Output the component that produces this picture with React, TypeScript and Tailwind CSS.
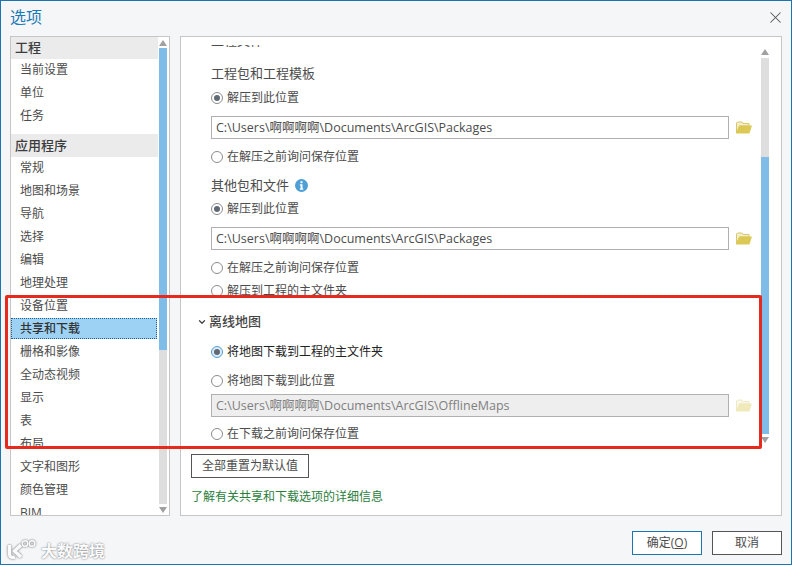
import { ChevronDown, X } from 'lucide-react';

const projectItems = ['当前设置', '单位', '任务'];
const appItems = [
  '常规',
  '地图和场景',
  '导航',
  '选择',
  '编辑',
  '地理处理',
  '设备位置',
  '共享和下载',
  '栅格和影像',
  '全动态视频',
  '显示',
  '表',
  '布局',
  '文字和图形',
  '颜色管理',
  'BIM',
];

function FolderIcon({ disabled }: { disabled?: boolean }) {
  return (
    <svg width="16" height="13" viewBox="0 0 16 13" className={disabled ? 'opacity-40' : ''}>
      <path d="M0.5 12V2L1.5 1H6L7 2.5H13V5H3.5L0.5 12Z" fill="#f4efd0" stroke="#d8c765" strokeWidth="1" />
      <path d="M0 12.5L3.2 4.6H16L13.4 12.5H0Z" fill="#dcc955" />
    </svg>
  );
}

function InfoIcon() {
  return (
    <svg width="13" height="13" viewBox="0 0 13 13">
      <circle cx="6.5" cy="6.5" r="6.5" fill="#4d9fd6" />
      <rect x="5.5" y="2.2" width="2" height="2" fill="#fff" />
      <path d="M4.8 5.2H7.5V9.6H8.3V10.8H4.8V9.6H5.6V6.4H4.8Z" fill="#fff" />
    </svg>
  );
}

function ScrollBar({ before, thumb, after }: { before: string; thumb: string; after: string }) {
  return (
    <div className="flex h-full w-2 flex-col items-center">
      <div className={`flex shrink-0 items-center justify-center ${before}`}>
        <div className="h-0 w-0 border-x-[4px] border-b-[6px] border-x-transparent border-b-[#a0a0a0]" />
      </div>
      <div className="flex w-2 flex-1 flex-col bg-[#dedede]">
        <div className={thumb} />
        <div className={after} />
      </div>
      <div className="flex h-[11px] shrink-0 items-center justify-center">
        <div className="h-0 w-0 border-x-[4px] border-t-[6px] border-x-transparent border-t-[#a0a0a0]" />
      </div>
    </div>
  );
}

function SideHeader({ label, first }: { label: string; first?: boolean }) {
  return (
    <div
      className={`flex items-center bg-[#ebebeb] pl-[4px] text-[13px] font-medium text-[#3c3c3c] ${
        first ? 'h-[22px]' : 'h-[23px]'
      }`}
    >
      {label}
    </div>
  );
}

function SideItem({ label, selected }: { label: string; selected?: boolean }) {
  return (
    <div
      className={
        selected
          ? 'mr-[1px] mb-[2px] flex h-[21px] items-center border border-dotted border-[#1f5f8f] bg-[#9dd2f5] pl-[8px] font-medium text-[#333]'
          : 'mb-[2px] flex h-[21px] items-center pl-[9px] text-[#4c4c4c]'
      }
    >
      {label}
    </div>
  );
}

function Radio({ checked, label, focus }: { checked?: boolean; label: string; focus?: boolean }) {
  return (
    <div className={`flex h-[23px] items-center gap-[4px] ${focus ? 'text-[#222]' : 'text-[#4c4c4c]'}`}>
      <span
        className={`flex size-[12px] shrink-0 items-center justify-center rounded-full border ${
          focus ? 'border-[#4d9fd6] bg-[#dcebf7]' : 'border-[#8c8c8c] bg-white'
        }`}
      >
        {checked ? <span className="size-[6px] rounded-full bg-[#5f6a75]" /> : null}
      </span>
      {label}
    </div>
  );
}

function PathRow({ value, disabled }: { value: string; disabled?: boolean }) {
  return (
    <div className="flex h-[23px] items-center">
      <div
        className={`flex h-[23px] w-[518px] items-center border border-[#b0b0b0] pt-[1px] pl-[4px] text-[12.5px] ${
          disabled ? 'bg-[#eeeeee] text-[#808080]' : 'bg-white text-[#4c4c4c]'
        }`}
      >
        {value}
      </div>
      <div className="ml-[7px] flex">
        <FolderIcon disabled={disabled} />
      </div>
    </div>
  );
}

function Watermark() {
  return (
    <div className="absolute top-[538px] left-[6px] flex items-center gap-[4px]">
      <svg
        width="30"
        height="20"
        viewBox="0 0 30 20"
        fill="none"
        stroke="#fbfbfb"
        className="[filter:drop-shadow(0_0_1px_#60646a)]"
      >
        <path d="M2.5 6V15C2.5 18 5 19 8 18" strokeWidth="3.4" />
        <path d="M14 6L7.5 12L14 18" strokeWidth="3.4" />
        <circle cx="18" cy="4.5" r="2.8" strokeWidth="1.4" />
        <circle cx="25" cy="4.5" r="2.8" strokeWidth="1.4" />
      </svg>
      <span className="mt-[3px] text-[16px] leading-none font-bold text-[#fbfbfb] [text-shadow:0_0_2px_#60646a]">
        大数跨境
      </span>
    </div>
  );
}

export default function App() {
  return (
    <div className="relative flex h-[565px] w-[792px] flex-col overflow-hidden border border-[#1b75b0] bg-[#f5f6f7] font-['Open_Sans','Noto_Sans_CJK_SC',sans-serif] text-[12px]">
      <header className="flex h-[35px] shrink-0 items-center justify-between pr-[6px] pb-[3px] pl-[9px]">
        <span className="text-[16px] text-[#1b7ab8]">选项</span>
        <X className="size-[19px] text-[#555]" strokeWidth={1.3} />
      </header>

      <div className="flex h-[480px] shrink-0 pr-[9px] pl-[9px]">
        <aside className="flex w-[160px] shrink-0 overflow-hidden border border-[#c6c6c6] bg-white">
          <div className="w-[147px] shrink-0 overflow-hidden">
            <SideHeader first label="工程" />
            {projectItems.map((item) => (
              <SideItem key={item} label={item} />
            ))}
            <div className="h-[6px]" />
            <SideHeader label="应用程序" />
            {appItems.map((item) => (
              <SideItem key={item} label={item} selected={item === '共享和下载'} />
            ))}
          </div>
          <div className="ml-[1px]">
            <ScrollBar before="h-[11px]" thumb="h-[302px] bg-[#7fbde8]" after="flex-1" />
          </div>
        </aside>

        <main className="ml-[10px] flex flex-1 flex-col border border-[#c6c6c6] bg-white">
          <div className="flex h-[417px] shrink-0 pt-[8px] pl-[10px]">
            <div className="h-[400px] w-[570px] overflow-hidden">
              <div className="-mt-[16px] pl-[20px]">
                <div className="flex h-[23px] items-center text-[13px] text-[#4c4c4c]">工程文件</div>
                <div className="h-[10px]" />
                <div className="flex h-[23px] items-center text-[13px] text-[#4c4c4c]">工程包和工程模板</div>
                <div className="h-[1px]" />
                <Radio checked label="解压到此位置" />
                <div className="h-[7px]" />
                <PathRow value="C:\Users\啊啊啊啊\Documents\ArcGIS\Packages" />
                <div className="h-[6px]" />
                <Radio label="在解压之前询问保存位置" />
                <div className="h-[6px]" />
                <div className="flex h-[23px] items-center gap-[6px] text-[13px] text-[#4c4c4c]">
                  其他包和文件
                  <InfoIcon />
                </div>
                <Radio checked label="解压到此位置" />
                <div className="h-[7px]" />
                <PathRow value="C:\Users\啊啊啊啊\Documents\ArcGIS\Packages" />
                <div className="h-[6px]" />
                <Radio label="在解压之前询问保存位置" />
                <Radio label="解压到工程的主文件夹" />
                <div className="h-[9px]" />
                <div className="-ml-[14px] flex h-[22px] items-center gap-[2px] text-[13px] font-medium text-[#444]">
                  <ChevronDown className="size-[10px]" strokeWidth={3} />
                  离线地图
                </div>
                <div className="h-[7px]" />
                <Radio checked focus label="将地图下载到工程的主文件夹" />
                <div className="h-[6px]" />
                <Radio label="将地图下载到此位置" />
                <div className="h-[2px]" />
                <PathRow disabled value="C:\Users\啊啊啊啊\Documents\ArcGIS\OfflineMaps" />
                <div className="h-[5px]" />
                <Radio label="在下载之前询问保存位置" />
              </div>
            </div>
            <div className="h-[400px]">
              <ScrollBar before="h-[13px]" thumb="h-[99px]" after="flex-1 bg-[#7fbde8]" />
            </div>
          </div>
          <div className="pl-[10px]">
            <button className="h-[24px] w-[118px] border border-[#555] bg-white text-center text-[#4c4c4c]">
              全部重置为默认值
            </button>
            <p className="mt-[10px] text-[#2a7d3c]">了解有关共享和下载选项的详细信息</p>
          </div>
        </main>
      </div>

      <footer className="flex flex-1 items-start justify-end gap-[10px] pt-[15px] pr-[9px]">
        <button className="h-[24px] w-[70px] border border-[#1b75b0] bg-white text-[#4c4c4c]">
          确定(<span className="underline">O</span>)
        </button>
        <button className="h-[24px] w-[70px] border border-[#555] bg-white text-[#4c4c4c]">取消</button>
      </footer>

      <Watermark />
      <div className="absolute top-[294px] left-[4px] h-[154px] w-[757px] rounded-[2px] border-[3px] border-[#e62b1e]" />
    </div>
  );
}
